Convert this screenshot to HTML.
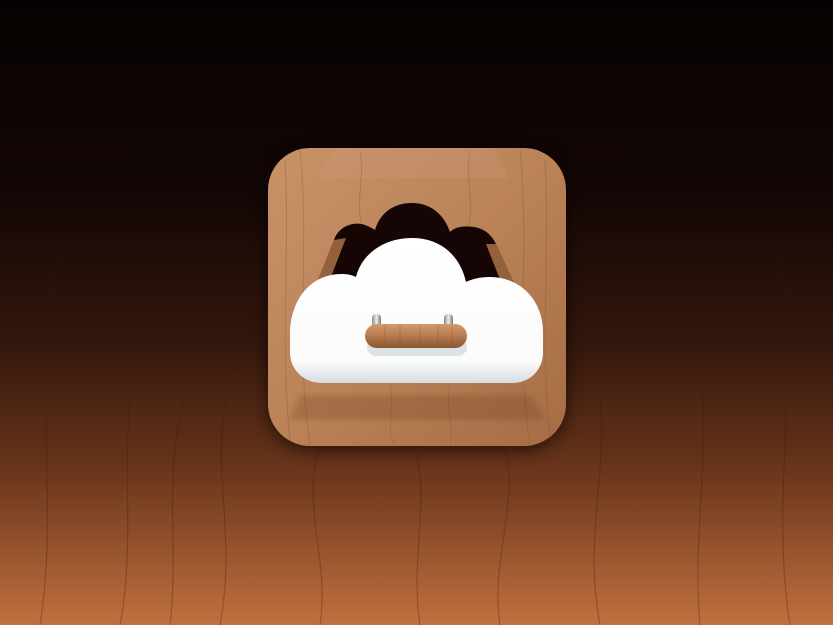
<!DOCTYPE html>
<html><head><style>html,body{margin:0;padding:0;width:833px;height:625px;overflow:hidden;background:#0a0404}</style></head>
<body>
<svg width="833" height="625" viewBox="0 0 833 625" xmlns="http://www.w3.org/2000/svg">
<defs>
<linearGradient id="bg" x1="0" y1="0" x2="0" y2="1">
<stop offset="0" stop-color="#070202"/>
<stop offset="0.3" stop-color="#120605"/>
<stop offset="0.55" stop-color="#33170c"/>
<stop offset="0.75" stop-color="#69341b"/>
<stop offset="1" stop-color="#c1703f"/>
</linearGradient>
<linearGradient id="wood" x1="0" y1="0" x2="1" y2="1">
<stop offset="0" stop-color="#c89268"/>
<stop offset="0.5" stop-color="#bb8258"/>
<stop offset="1" stop-color="#a66c44"/>
</linearGradient>
<linearGradient id="cloud" x1="0" y1="0" x2="0" y2="1">
<stop offset="0" stop-color="#ffffff"/>
<stop offset="0.85" stop-color="#fbfbfb"/>
<stop offset="1" stop-color="#d6dde2"/>
</linearGradient>
<linearGradient id="handle" x1="0" y1="0" x2="0" y2="1">
<stop offset="0" stop-color="#d49a6c"/>
<stop offset="0.5" stop-color="#b57a4e"/>
<stop offset="1" stop-color="#8a5530"/>
</linearGradient>
<linearGradient id="peg" x1="0" y1="0" x2="1" y2="0">
<stop offset="0" stop-color="#888"/><stop offset="0.5" stop-color="#eee"/><stop offset="1" stop-color="#777"/>
</linearGradient>
<filter id="blur"><feGaussianBlur stdDeviation="8"/></filter>
<filter id="b2"><feGaussianBlur stdDeviation="3"/></filter>
</defs>
<rect width="833" height="625" fill="url(#bg)"/>
<g stroke="#3a1a0c" stroke-opacity="0.3" fill="none" stroke-width="1.2">
<path d="M40 625 C60 500 30 380 60 250"/><path d="M120 625 C140 520 110 420 150 300"/>
<path d="M220 625 C240 520 200 450 240 350"/><path d="M600 625 C580 520 620 450 590 350"/>
<path d="M700 625 C690 520 720 420 690 300"/><path d="M790 625 C770 500 800 380 780 250"/>
<path d="M320 625 C330 560 300 500 320 450"/><path d="M500 625 C490 560 520 500 505 450"/>
<path d="M420 625 C410 560 430 500 415 450"/><path d="M170 625 C180 540 160 470 190 380"/>
</g>
<rect x="268" y="152" width="298" height="298" rx="42" fill="#000" opacity="0.6" filter="url(#blur)"/>
<rect x="268" y="148" width="298" height="298" rx="42" fill="url(#wood)"/>
<path d="M335 148 L318 178 L510 178 L495 148Z" fill="#fff" opacity="0.05"/>
<g stroke="#8a5431" stroke-opacity="0.35" fill="none" stroke-width="1">
<path d="M285 160 C290 250 280 350 290 440"/><path d="M300 150 C310 250 295 350 310 445"/>
<path d="M520 150 C530 250 515 350 530 445"/><path d="M545 160 C550 250 540 350 550 440"/>
<path d="M390 385 C395 410 385 430 395 445"/><path d="M450 385 C445 410 455 430 450 445"/>
<path d="M360 150 C365 180 355 200 362 225"/><path d="M470 150 C465 180 475 200 468 228"/>
</g>
<path d="M300 395 L530 395 L545 420 L290 420Z" fill="#6a3a1c" opacity="0.25" filter="url(#b2)"/>
<path d="M310 300 L334 240 C338 228 350 222 362 224 C368 226 372 228 375 230 C380 212 395 203 412 203 C430 203 444 214 450 232 C456 226 465 226 474 227 C486 229 492 236 496 244 L522 300Z" fill="#150605"/>
<path d="M310 300 L334 240 L346 238 L322 300Z" fill="#c98a55" opacity="0.7"/>
<path d="M522 300 L496 244 L486 244 L508 300Z" fill="#c98a55" opacity="0.7"/>
<path d="M290 335 C290 300 310 274 342 274 C347 274 352 275 356 277 C362 253 385 238 412 238 C440 238 460 255 466 282 C472 279 480 277 490 277 C520 277 543 300 543 332 L543 352 C543 370 530 383 512 383 L322 383 C304 383 290 370 290 352Z" fill="url(#cloud)"/>
<rect x="372" y="314" width="9" height="16" rx="4" fill="url(#peg)"/>
<rect x="444" y="314" width="9" height="16" rx="4" fill="url(#peg)"/>
<rect x="367" y="338" width="100" height="18" rx="9" fill="#cfd8de" opacity="0.7"/>
<rect x="365" y="324" width="102" height="24" rx="12" fill="url(#handle)"/>
<g stroke="#7a4522" stroke-opacity="0.3" stroke-width="1"><path d="M385 326 V346M400 325V347M420 326V346M438 325V347M452 326V346"/></g>
</svg>
</body></html>
